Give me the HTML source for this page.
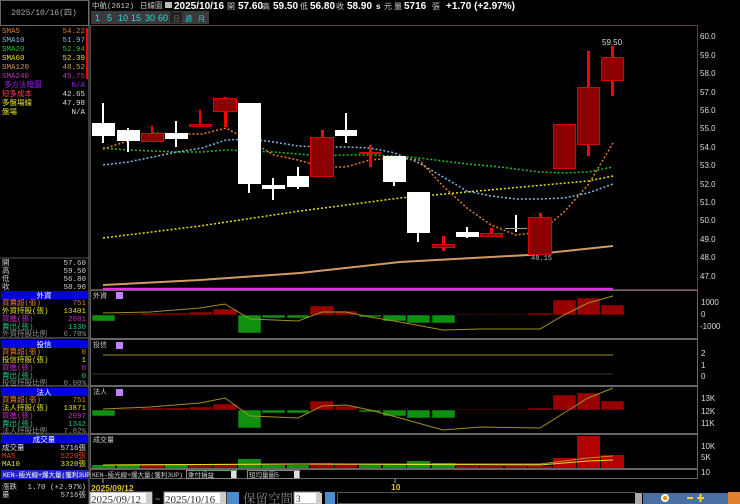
<!DOCTYPE html>
<html><head><meta charset="utf-8"><style>
html,body{margin:0;padding:0;background:#000;width:740px;height:504px;overflow:hidden}
svg{display:block}
</style></head><body>
<svg width="740" height="504" viewBox="0 0 740 504" xmlns="http://www.w3.org/2000/svg" font-family="Liberation Mono, Noto Sans CJK TC, monospace" font-size="8">
<rect width="740" height="504" fill="#000"/>
<!-- left panel -->
<rect x="0.5" y="0.5" width="88" height="25" fill="#000" stroke="#666"/>
<text x="44" y="15" fill="#aaa" text-anchor="middle" font-size="8">2025/10/16(四)</text>
<line x1="89" y1="0" x2="89" y2="504" stroke="#777"/>
<g font-size="7.5">
<text x="2" y="33" fill="#e07b30">SMA5</text><text x="85" y="33" fill="#e07b30" text-anchor="end">54.22</text>
<text x="2" y="42" fill="#7fb8e0">SMA10</text><text x="85" y="42" fill="#7fb8e0" text-anchor="end">51.97</text>
<text x="2" y="51" fill="#20c020">SMA20</text><text x="85" y="51" fill="#20c020" text-anchor="end">52.94</text>
<text x="2" y="60" fill="#e0e020">SMA60</text><text x="85" y="60" fill="#e0e020" text-anchor="end">52.39</text>
<text x="2" y="69" fill="#d09a60">SMA120</text><text x="85" y="69" fill="#d09a60" text-anchor="end">48.52</text>
<text x="2" y="78" fill="#c030c0">SMA240</text><text x="85" y="78" fill="#c030c0" text-anchor="end">45.75</text>
<text x="4" y="87" fill="#a020f0">多方法暗圖</text><text x="85" y="87" fill="#a020f0" text-anchor="end">N/A</text>
<text x="2" y="96" fill="#ff4060">短多成本</text><text x="85" y="96" fill="#ddd" text-anchor="end">42.65</text>
<text x="2" y="105" fill="#e0e020">多盤場線</text><text x="85" y="105" fill="#ddd" text-anchor="end">47.98</text>
<text x="2" y="114" fill="#e0e020">盤場</text><text x="85" y="114" fill="#ddd" text-anchor="end">N/A</text>
</g>
<g fill="#f00"><rect x="86" y="28" width="2" height="51"/></g>
<line x1="0" y1="258" x2="89" y2="258" stroke="#555"/>
<g font-size="7.5" fill="#ccc">
<text x="2" y="265">開</text><text x="86" y="265" text-anchor="end">57.60</text>
<text x="2" y="273">高</text><text x="86" y="273" text-anchor="end">59.50</text>
<text x="2" y="281">低</text><text x="86" y="281" text-anchor="end">56.80</text>
<text x="2" y="289">收</text><text x="86" y="289" text-anchor="end">58.90</text>
</g>
<g font-size="7.5">
<rect x="1" y="291" width="87" height="8" fill="#0000e0"/><text x="44" y="298" fill="#fff" text-anchor="middle">外資</text>
<text x="2" y="305" fill="#e07b30">買賣超(張)</text><text x="86" y="305" fill="#e07b30" text-anchor="end">751</text>
<text x="2" y="313" fill="#e0e020">外資持股(張)</text><text x="86" y="313" fill="#e0e020" text-anchor="end">13401</text>
<text x="2" y="321" fill="#c030c0">買進(張)</text><text x="86" y="321" fill="#c030c0" text-anchor="end">2081</text>
<text x="2" y="329" fill="#20c080">賣出(張)</text><text x="86" y="329" fill="#20c080" text-anchor="end">1330</text>
<text x="2" y="336" fill="#888">外資持股比例</text><text x="86" y="336" fill="#888" text-anchor="end">6.78%</text>
<line x1="0" y1="338" x2="89" y2="338" stroke="#777"/>
<rect x="1" y="340" width="87" height="8" fill="#0000e0"/><text x="44" y="347" fill="#fff" text-anchor="middle">投信</text>
<text x="2" y="354" fill="#e07b30">買賣超(張)</text><text x="86" y="354" fill="#e07b30" text-anchor="end">0</text>
<text x="2" y="362" fill="#e0e020">投信持股(張)</text><text x="86" y="362" fill="#e0e020" text-anchor="end">1</text>
<text x="2" y="370" fill="#c030c0">買進(張)</text><text x="86" y="370" fill="#c030c0" text-anchor="end">0</text>
<text x="2" y="378" fill="#20c080">賣出(張)</text><text x="86" y="378" fill="#20c080" text-anchor="end">0</text>
<text x="2" y="385" fill="#888">投信持股比例</text><text x="86" y="385" fill="#888" text-anchor="end">0.00%</text>
<line x1="0" y1="386" x2="89" y2="386" stroke="#777"/>
<rect x="1" y="388" width="87" height="8" fill="#0000e0"/><text x="44" y="395" fill="#fff" text-anchor="middle">法人</text>
<text x="2" y="402" fill="#e07b30">買賣超(張)</text><text x="86" y="402" fill="#e07b30" text-anchor="end">751</text>
<text x="2" y="410" fill="#e0e020">法人持股(張)</text><text x="86" y="410" fill="#e0e020" text-anchor="end">13871</text>
<text x="2" y="418" fill="#c030c0">買進(張)</text><text x="86" y="418" fill="#c030c0" text-anchor="end">2097</text>
<text x="2" y="426" fill="#20c080">賣出(張)</text><text x="86" y="426" fill="#20c080" text-anchor="end">1342</text>
<text x="2" y="433" fill="#888">法人持股比例</text><text x="86" y="433" fill="#888" text-anchor="end">7.02%</text>
<line x1="0" y1="434" x2="89" y2="434" stroke="#777"/>
<rect x="1" y="435" width="87" height="8" fill="#0000e0"/><text x="44" y="442" fill="#fff" text-anchor="middle">成交量</text>
<text x="2" y="450" fill="#ddd">成交量</text><text x="86" y="450" fill="#ddd" text-anchor="end">5716張</text>
<text x="2" y="458" fill="#e04020">MA5</text><text x="86" y="458" fill="#e04020" text-anchor="end">5220張</text>
<text x="2" y="466" fill="#e0e020">MA10</text><text x="86" y="466" fill="#e0e020" text-anchor="end">3320張</text>
<rect x="1" y="470" width="87" height="9" fill="#2020d0"/><text x="3" y="477" fill="#fff" font-size="6.5">KEN-極光線+爆大量(獲利3UP)</text>
<text x="2" y="489" fill="#ccc">漲跌</text><text x="86" y="489" fill="#ccc" text-anchor="end">1.70 (+2.97%)</text>
<text x="2" y="497" fill="#ccc">量</text><text x="86" y="497" fill="#ccc" text-anchor="end">5716張</text>
</g>
<!-- top bar -->
<text x="92" y="8" fill="#ccc" font-size="7.5">中航(2612)</text>
<text x="140" y="8" fill="#ccc" font-size="7.5">日線圖</text>
<rect x="165" y="2" width="7" height="6" fill="#bbb"/>
<g font-family="Liberation Sans, sans-serif" font-weight="bold" font-size="10" fill="#fff">
<text x="174" y="9">2025/10/16</text>
<text x="227" y="9" font-size="8" font-weight="normal" fill="#ccc">開</text><text x="238" y="9">57.60</text>
<text x="262" y="9" font-size="8" font-weight="normal" fill="#ccc">高</text><text x="273" y="9">59.50</text>
<text x="300" y="9" font-size="8" font-weight="normal" fill="#ccc">低</text><text x="310" y="9">56.80</text>
<text x="336" y="9" font-size="8" font-weight="normal" fill="#ccc">收</text><text x="347" y="9">58.90</text>
<text x="376" y="9" font-size="8">s</text><text x="384" y="9" font-size="8" font-weight="normal" fill="#ccc">元</text>
<text x="394" y="9" font-size="8" font-weight="normal" fill="#ccc">量</text><text x="404" y="9">5716</text>
<text x="432" y="9" font-size="8" font-weight="normal" fill="#ccc">張</text><text x="446" y="9">+1.70 (+2.97%)</text>
</g>
<g font-size="9" fill="#2dd" font-family="Liberation Sans, sans-serif">
<rect x="91" y="11" width="118" height="13" fill="#3a3a3a"/>
<text x="95" y="21">1</text><text x="107" y="21">5</text><text x="118" y="21">10</text><text x="131" y="21">15</text><text x="145" y="21">30</text><text x="158" y="21">60</text>
<rect x="170" y="12" width="12" height="11" fill="#222"/><text x="173" y="21" fill="#666" font-size="7">日</text><text x="185" y="21" font-size="7">週</text><text x="198" y="21" font-size="7">月</text>
</g>
<!-- main chart -->
<rect x="90.5" y="25.5" width="607" height="264" fill="none" stroke="#5a4040"/>
<g fill="#ddd" font-size="8" font-family="Liberation Sans, sans-serif">
<text x="700" y="39">60.0</text><text x="700" y="58">59.0</text><text x="700" y="76">58.0</text><text x="700" y="95">57.0</text><text x="700" y="113">56.0</text><text x="700" y="131">55.0</text><text x="700" y="150">54.0</text><text x="700" y="168">53.0</text><text x="700" y="187">52.0</text><text x="700" y="205">51.0</text><text x="700" y="223">50.0</text><text x="700" y="242">49.0</text><text x="700" y="260">48.0</text><text x="700" y="279">47.0</text>
</g>
<!-- MA lines -->
<polyline fill="none" stroke="#d09a60" stroke-width="2" points="103,285 200,280 300,273 400,262 528,255 613,246"/>
<polyline fill="none" stroke="#e0e020" stroke-width="1.5" stroke-dasharray="2,2" points="103,238 200,226 300,211 400,198 500,189 588,181 613,176"/>
<polyline fill="none" stroke="#20c020" stroke-width="1.5" stroke-dasharray="2,2" points="103,148 128,150 153,151 177,152 202,152 226,150 250,151 274,152 298,154 322,156 346,155 370,155 395,156 419,158 443,161 467,164 491,166 516,169 540,172 564,173 588,172 613,167"/>
<polyline fill="none" stroke="#7fb8e0" stroke-width="1.5" stroke-dasharray="2,2" points="103,165 128,162 153,157 177,152 202,148 226,140 250,139 274,142 298,146 322,147 346,147 370,148 395,153 419,163 443,177 467,191 491,196 516,199 540,199 564,198 588,193 613,184"/>
<polyline fill="none" stroke="#e07b30" stroke-width="1.5" stroke-dasharray="2,2" points="103,149 128,141 153,133 177,134 202,134 226,128 250,141 274,155 298,160 322,167 346,167 370,160 395,158 419,160 443,186 467,208 491,225 516,235 540,232 564,212 588,185 613,143"/>
<line x1="103" y1="289" x2="613" y2="289" stroke="#e030e0" stroke-width="2.5"/>
<!-- candles -->
<g fill="#fff">
<rect x="102" y="103" width="2" height="40"/><rect x="92" y="123" width="23" height="13"/>
<rect x="127" y="128" width="2" height="24"/><rect x="117" y="130" width="23" height="11"/>
<rect x="175" y="121" width="2" height="26"/><rect x="165" y="133" width="23" height="6"/>
<rect x="248" y="184" width="2" height="9"/><rect x="238" y="103" width="23" height="81"/>
<rect x="272" y="178" width="2" height="22"/><rect x="262" y="185" width="23" height="4"/>
<rect x="297" y="167" width="2" height="22"/><rect x="287" y="176" width="22" height="11"/>
<rect x="345" y="113" width="2" height="30"/><rect x="335" y="130" width="22" height="6"/>
<rect x="393" y="182" width="2" height="4"/><rect x="383" y="156" width="23" height="26"/>
<rect x="417" y="233" width="2" height="9"/><rect x="407" y="192" width="23" height="41"/>
<rect x="466" y="227" width="2" height="11"/><rect x="456" y="232" width="23" height="5"/>
<rect x="515" y="215" width="2" height="17"/><rect x="505" y="228" width="22" height="1" fill="#999"/>
</g>
<g fill="#8b0000" stroke="#e00000" stroke-width="1">
<rect x="151" y="126" width="2" height="7" fill="#f00" stroke="none"/><rect x="141.5" y="133.5" width="22" height="8"/>
<rect x="199" y="110" width="2" height="14" fill="#f00" stroke="none"/><rect x="189.5" y="124.5" width="22" height="2"/>
<rect x="224" y="97" width="3" height="30" fill="#f00" stroke="none"/><rect x="213.5" y="98.5" width="23" height="13"/>
<rect x="321" y="130" width="3" height="7" fill="#f00" stroke="none"/><rect x="310.5" y="137.5" width="23" height="39"/>
<rect x="369" y="145" width="3" height="22" fill="#f00" stroke="none"/><rect x="359.5" y="152.5" width="21" height="1"/>
<rect x="442" y="236" width="3" height="15" fill="#f00" stroke="none"/><rect x="432.5" y="244.5" width="22" height="3"/>
<rect x="490" y="228" width="3" height="5" fill="#f00" stroke="none"/><rect x="480.5" y="233.5" width="22" height="3"/>
<rect x="539" y="213" width="3" height="4" fill="#f00" stroke="none"/><rect x="528.5" y="217.5" width="23" height="37"/>
<rect x="553.5" y="124.5" width="22" height="44"/>
<rect x="587" y="51" width="3" height="105" fill="#f00" stroke="none"/><rect x="577.5" y="87.5" width="22" height="57"/>
<rect x="611" y="46" width="3" height="50" fill="#f00" stroke="none"/><rect x="601.5" y="57.5" width="22" height="23"/>
</g>
<text x="531" y="260" fill="#bbb" font-size="7">48.15</text>
<text x="602" y="45" fill="#ddd" font-size="8" font-family="Liberation Sans, sans-serif">59.50</text>
<!-- subpanels borders -->
<g fill="none" stroke="#666">
<rect x="90.5" y="290.5" width="607" height="48"/>
<rect x="90.5" y="339.5" width="607" height="46"/>
<rect x="90.5" y="386.5" width="607" height="47"/>
<rect x="90.5" y="434.5" width="607" height="34"/>
</g>
<g fill="#ccc" font-size="7">
<text x="93" y="298">外資</text><text x="93" y="347">投信</text><text x="93" y="394">法人</text><text x="93" y="442">成交量</text>
</g>
<g fill="#c080ff"><rect x="116" y="292" width="7" height="7"/><rect x="116" y="342" width="7" height="7"/><rect x="116" y="389" width="7" height="7"/></g>
<g fill="#ddd" font-size="8" font-family="Liberation Sans, sans-serif">
<text x="701" y="305">1000</text><text x="701" y="317">0</text><text x="700" y="329">-1000</text>
<text x="701" y="356">2</text><text x="701" y="368">1</text><text x="701" y="379">0</text>
<text x="701" y="401">13K</text><text x="701" y="414">12K</text><text x="701" y="426">11K</text>
<text x="701" y="449">10K</text><text x="701" y="460">5K</text><text x="701" y="475">10</text>
</g>
<!-- foreign bars -->
<g stroke="#000" stroke-width="0.5">
<rect x="92" y="315" width="23" height="6" fill="#109010"/>
<rect x="117" y="314" width="23" height="1" fill="#900"/>
<rect x="141" y="313" width="23" height="2" fill="#900"/>
<rect x="165" y="313" width="23" height="2" fill="#900"/>
<rect x="189" y="312" width="23" height="3" fill="#900"/>
<rect x="213" y="309" width="24" height="6" fill="#900"/>
<rect x="238" y="315" width="23" height="18" fill="#109010"/>
<rect x="262" y="315" width="23" height="3" fill="#109010"/>
<rect x="287" y="315" width="22" height="3" fill="#109010"/>
<rect x="310" y="306" width="24" height="9" fill="#900"/>
<rect x="335" y="311" width="22" height="4" fill="#900"/>
<rect x="359" y="315" width="22" height="2" fill="#109010"/>
<rect x="383" y="315" width="23" height="6" fill="#109010"/>
<rect x="407" y="315" width="23" height="8" fill="#109010"/>
<rect x="432" y="315" width="23" height="8" fill="#109010"/>
<rect x="456" y="314" width="23" height="1" fill="#600"/>
<rect x="480" y="314" width="23" height="1" fill="#600"/>
<rect x="505" y="314" width="22" height="1" fill="#600"/>
<rect x="528" y="313" width="24" height="2" fill="#900"/>
<rect x="553" y="300" width="23" height="15" fill="#900"/>
<rect x="577" y="298" width="23" height="17" fill="#900"/>
<rect x="601" y="305" width="23" height="10" fill="#900"/>
</g>
<polyline fill="none" stroke="#a09020" points="103,313 150,312 200,308 225,304 250,319 298,321 322,312 346,312 370,317 400,322 443,330 480,329 540,329 564,315 588,303 613,296"/>
<!-- 投信 -->
<line x1="103" y1="355" x2="613" y2="355" stroke="#a09020"/>
<line x1="90" y1="374" x2="613" y2="374" stroke="#333"/>
<!-- 法人 bars -->
<g stroke="#000" stroke-width="0.5">
<rect x="92" y="410" width="23" height="6" fill="#109010"/>
<rect x="117" y="409" width="23" height="1" fill="#900"/>
<rect x="141" y="408" width="23" height="2" fill="#900"/>
<rect x="165" y="408" width="23" height="2" fill="#900"/>
<rect x="189" y="407" width="23" height="3" fill="#900"/>
<rect x="213" y="404" width="24" height="6" fill="#900"/>
<rect x="238" y="410" width="23" height="18" fill="#109010"/>
<rect x="262" y="410" width="23" height="3" fill="#109010"/>
<rect x="287" y="410" width="22" height="3" fill="#109010"/>
<rect x="310" y="401" width="24" height="9" fill="#900"/>
<rect x="335" y="406" width="22" height="4" fill="#900"/>
<rect x="359" y="410" width="22" height="2" fill="#109010"/>
<rect x="383" y="410" width="23" height="6" fill="#109010"/>
<rect x="407" y="410" width="23" height="8" fill="#109010"/>
<rect x="432" y="410" width="23" height="8" fill="#109010"/>
<rect x="456" y="409" width="23" height="1" fill="#600"/>
<rect x="480" y="409" width="23" height="1" fill="#600"/>
<rect x="505" y="409" width="22" height="1" fill="#600"/>
<rect x="528" y="408" width="24" height="2" fill="#900"/>
<rect x="553" y="395" width="23" height="15" fill="#900"/>
<rect x="577" y="393" width="23" height="17" fill="#900"/>
<rect x="601" y="401" width="23" height="9" fill="#900"/>
</g>
<polyline fill="none" stroke="#a09020" points="103,409 150,407 200,403 225,398 250,416 298,418 322,406 346,405 370,410 400,418 443,430 480,427 540,428 564,413 588,398 613,388"/>
<!-- volume bars -->
<g>
<rect x="92" y="465" width="23" height="3" fill="#109010"/>
<rect x="117" y="465" width="23" height="3" fill="#109010"/>
<rect x="141" y="465" width="23" height="3" fill="#900"/>
<rect x="165" y="465" width="23" height="3" fill="#109010"/>
<rect x="189" y="465" width="23" height="3" fill="#900"/>
<rect x="213" y="464" width="24" height="4" fill="#900"/>
<rect x="238" y="459" width="23" height="9" fill="#109010"/>
<rect x="262" y="465" width="23" height="3" fill="#109010"/>
<rect x="287" y="465" width="22" height="3" fill="#109010"/>
<rect x="310" y="463" width="24" height="5" fill="#900"/>
<rect x="335" y="464" width="22" height="4" fill="#900"/>
<rect x="359" y="465" width="22" height="3" fill="#109010"/>
<rect x="383" y="465" width="23" height="3" fill="#109010"/>
<rect x="407" y="461" width="23" height="7" fill="#109010"/>
<rect x="432" y="463" width="23" height="5" fill="#109010"/>
<rect x="456" y="466" width="23" height="2" fill="#900"/>
<rect x="480" y="466" width="23" height="2" fill="#900"/>
<rect x="505" y="466" width="22" height="2" fill="#900"/>
<rect x="528" y="466" width="24" height="2" fill="#900"/>
<rect x="553" y="458" width="23" height="10" fill="#b00000"/>
<rect x="577" y="436" width="23" height="32" fill="#b00000"/>
<rect x="601" y="455" width="23" height="13" fill="#b00000"/>
</g>
<polyline fill="none" stroke="#e07b30" points="103,465 300,464 500,464 540,464 564,461 588,458 613,456"/>
<polyline fill="none" stroke="#e0e020" points="103,465 300,464 540,465 564,463 588,461 613,460"/>
<!-- toolbar -->
<rect x="90.5" y="469.5" width="607" height="9" fill="#000" stroke="#666"/>
<text x="92" y="477" fill="#ccc" font-size="6.5">KEN-極光線+爆大量(獲利3UP)</text>
<rect x="186.5" y="470.5" width="50" height="8" fill="#000" stroke="#888"/><text x="188" y="477" fill="#ccc" font-size="6.5">乘付損益</text><rect x="231" y="471" width="5" height="7" fill="#ddd"/>
<rect x="247.5" y="470.5" width="52" height="8" fill="#000" stroke="#888"/><text x="249" y="477" fill="#ccc" font-size="6.5">短均量圖5</text><rect x="294" y="471" width="5" height="7" fill="#ddd"/>
<line x1="103" y1="479" x2="103" y2="483" stroke="#aaa"/>
<line x1="395" y1="479" x2="395" y2="483" stroke="#aaa"/>
<text x="91" y="491" fill="#e0c020" font-family="Liberation Sans, sans-serif" font-size="8.5" font-weight="bold">2025/09/12</text>
<text x="391" y="490" fill="#e0c020" font-family="Liberation Sans, sans-serif" font-size="8.5" font-weight="bold">10</text>
<!-- bottom controls -->
<rect x="90" y="492" width="62" height="12" fill="#fff" stroke="#888"/><text x="91" y="503" fill="#333" font-family="Liberation Serif, serif" font-size="11">2025/09/12</text><rect x="146" y="493" width="6" height="11" fill="#ccc"/>
<text x="155" y="502" fill="#ccc" font-size="9">~</text>
<rect x="164" y="492" width="62" height="12" fill="#fff" stroke="#888"/><text x="165" y="503" fill="#333" font-family="Liberation Serif, serif" font-size="11">2025/10/16</text><rect x="220" y="493" width="6" height="11" fill="#ccc"/>
<rect x="227" y="492" width="12" height="12" fill="#4a8cd0"/>
<text x="243" y="503" fill="#888" font-family="Noto Serif CJK SC, serif" font-size="12.5">保留空間</text>
<rect x="294" y="492" width="26" height="12" fill="#fff" stroke="#888"/><text x="296" y="502" fill="#333" font-size="9" font-family="Liberation Serif, serif">3</text><rect x="316" y="493" width="6" height="11" fill="#ccc"/>
<rect x="325" y="492" width="10" height="12" fill="#4a8cd0"/>
<rect x="337.5" y="492.5" width="298" height="11" fill="#000" stroke="#555"/>
<rect x="635" y="493" width="7" height="11" fill="#aaa"/>
<rect x="643" y="493" width="97" height="11" fill="#4a6fa0"/>
<g fill="#ffd020"><rect x="687" y="497" width="6" height="2"/><rect x="697" y="497" width="7" height="2"/><rect x="699.5" y="494" width="2" height="8"/></g>
<circle cx="665" cy="498" r="4" fill="#fff"/><circle cx="665" cy="498" r="2" fill="#f80"/>
<rect x="728" y="492" width="12" height="12" fill="#e08030"/>
</svg>
</body></html>
